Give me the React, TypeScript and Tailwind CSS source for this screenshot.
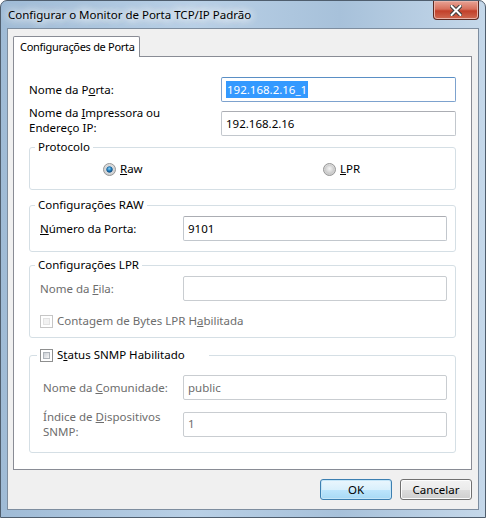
import React from "react";

const FONT = { fontFamily: '"Noto Sans", "Open Sans", sans-serif' };

function Radio({ checked }: { checked?: boolean }) {
  return (
    <svg width="13" height="13" viewBox="0 0 13 13" className="shrink-0">
      <defs>
        <radialGradient id="rg-off" cx="50%" cy="40%" r="60%">
          <stop offset="0%" stopColor="#f4f4f4" />
          <stop offset="100%" stopColor="#c9c9c9" />
        </radialGradient>
        <radialGradient id="rg-on" cx="45%" cy="35%" r="60%">
          <stop offset="0%" stopColor="#8fd2f4" />
          <stop offset="60%" stopColor="#1f7fc0" />
          <stop offset="100%" stopColor="#0d4f86" />
        </radialGradient>
      </defs>
      <circle cx="6.5" cy="6.5" r="6" fill="url(#rg-off)" stroke="#979797" strokeWidth="1" />
      <circle cx="6.5" cy="6.5" r="4.2" fill={checked ? "#eef2f5" : "url(#rg-off)"} stroke="#c8c8c8" strokeWidth="0.6" />
      {checked && <circle cx="6.5" cy="6.5" r="3" fill="url(#rg-on)" stroke="#1a4c77" strokeWidth="0.5" />}
    </svg>
  );
}

function Check({ disabled }: { disabled?: boolean }) {
  return (
    <span
      className={`w-[13px] h-[13px] shrink-0 border p-[2px] bg-white ${
        disabled ? "border-[#c6c6c6]" : "border-[#8e8f8f]"
      }`}
    >
      <span
        className={`block w-full h-full border ${
          disabled
            ? "border-[#e3e3e3] bg-[#f2f2f2]"
            : "border-[#aeb3b9] bg-gradient-to-br from-[#cbcfd5] to-[#f6f6f6]"
        }`}
      />
    </span>
  );
}

function Field({ value, disabled, selected }: { value?: string; disabled?: boolean; selected?: boolean }) {
  return (
    <div
      className={`h-[25px] rounded-[2px] border bg-white flex items-center px-[4px] ${
        selected
          ? "border-[#7da2ce] border-t-[#5a8fc5]"
          : disabled
          ? "border-[#c9cdd1]"
          : "border-[#c2c7cd] border-t-[#abadb3]"
      } ${disabled ? "text-[#6d6d6d]" : "text-black"}`}
    >
      {selected ? (
        <span className="bg-[#3399ff] text-white px-[1px] leading-[17px]">{value}</span>
      ) : (
        <span>{value}</span>
      )}
    </div>
  );
}

function Button({ label, primary }: { label: string; primary?: boolean }) {
  return (
    <div
      className={`w-[72px] h-[21px] rounded-[3px] border flex items-center justify-center text-black ${
        primary
          ? "border-[#3c7fb1] bg-[linear-gradient(#eaf6fd_0%,#d9f0fc_50%,#bee6fd_50%,#a7d9f5_100%)] shadow-[inset_0_0_0_1px_#c5e6f8]"
          : "border-[#707070] bg-[linear-gradient(#f2f2f2_0%,#ebebeb_50%,#dddddd_50%,#cfcfcf_100%)] shadow-[inset_0_0_0_1px_#fcfcfc]"
      }`}
    >
      {label}
    </div>
  );
}

export default function App() {
  return (
    <div
      className="w-[486px] h-[518px] relative overflow-hidden rounded-t-[7px] border border-[#4f5e6e] bg-[linear-gradient(90deg,#9fbbd6_0%,#b9d0e6_40%,#a7c1da_70%,#c5d8ea_100%)] flex flex-col text-[11.5px]"
      style={FONT}
    >
      {/* title bar */}
      <div className="h-[27px] shrink-0 flex items-center pl-[7px]">
        <span className="text-black [text-shadow:0_0_8px_#fff,0_0_10px_#fff,0_0_12px_#fff]">
          Configurar o Monitor de Porta TCP/IP Padrão
        </span>
      </div>
      <div className="absolute top-0 right-[6px] w-[46px] h-[19px] rounded-b-[4px] border border-t-0 border-[#5c2a22] bg-[linear-gradient(#e8a395_0%,#d7705c_45%,#c2402a_55%,#cf6a52_100%)] flex items-center justify-center shadow-[inset_0_0_0_1px_#eab3a8]">
        <svg width="12" height="11" viewBox="0 0 12 11">
          <path d="M1.5 1 L10.5 10 M10.5 1 L1.5 10" stroke="#3c3c3c" strokeWidth="4" strokeLinecap="round" />
          <path d="M1.5 1 L10.5 10 M10.5 1 L1.5 10" stroke="#ffffff" strokeWidth="2" strokeLinecap="round" />
        </svg>
      </div>

      {/* client area */}
      <div className="mx-[6px] mb-[7px] flex-1 border border-[#7d8d9f] bg-[#f0f0f0] flex flex-col px-[5px] pt-[7px] text-black">
        {/* tab header */}
        <div className="flex">
          <div className="w-[127px] h-[21px] -mb-px relative z-10 border border-b-0 border-[#898c95] bg-white rounded-t-[2px] flex items-center pl-[6px] whitespace-nowrap text-[11px] tracking-[-0.3px]">
            Configurações de Porta
          </div>
        </div>
        {/* tab page */}
        <div className="w-[459px] h-[414px] border border-[#898c95] bg-white px-[15px] pt-[20px]">
          <div className="flex items-center h-[25px]">
            <span className="w-[192px]">
              Nome da P<u>o</u>rta:
            </span>
            <div className="w-[235px]">
              <Field value="192.168.2.16_1" selected />
            </div>
          </div>
          <div className="flex items-start h-[25px] mt-[9px]">
            <span className="w-[192px] leading-[15px] -mt-[6px]">
              Nome da <u>I</u>mpressora ou
              <br />
              Endereço IP:
            </span>
            <div className="w-[235px]">
              <Field value="192.168.2.16" />
            </div>
          </div>

          <fieldset className="mt-[3px] w-[427px] border border-[#d5dfe5] rounded-[3px] pb-[12px]">
            <legend className="ml-[5px] px-[3px] leading-[16px]">Protocolo</legend>
            <div className="flex items-center h-[16px] mt-[6px]">
              <div className="ml-[73px] w-[220px] flex items-center gap-[4px]">
                <Radio checked />
                <span>
                  <u>R</u>aw
                </span>
              </div>
              <div className="flex items-center gap-[4px]">
                <Radio />
                <span>
                  <u>L</u>PR
                </span>
              </div>
            </div>
          </fieldset>

          <fieldset className="mt-[7px] w-[427px] border border-[#d5dfe5] rounded-[3px] pb-[10px]">
            <legend className="ml-[5px] px-[3px] leading-[16px]">Configurações RAW</legend>
            <div className="flex items-center mt-[3px] pl-[10px] pr-[8px]">
              <span className="w-[143px]">
                <u>N</u>úmero da Porta:
              </span>
              <div className="flex-1">
                <Field value="9101" />
              </div>
            </div>
          </fieldset>

          <fieldset className="mt-[5px] w-[427px] border border-[#d5dfe5] rounded-[3px] pb-[8px]">
            <legend className="ml-[5px] px-[3px] leading-[16px]">Configurações LPR</legend>
            <div className="pl-[10px] pr-[8px] text-[#6d6d6d]">
              <div className="flex items-center mt-[3px]">
                <span className="w-[143px]">
                  Nome da <u>F</u>ila:
                </span>
                <div className="flex-1">
                  <Field disabled />
                </div>
              </div>
              <div className="flex items-center gap-[4px] h-[16px] mt-[12px]">
                <Check disabled />
                <span>
                  Contagem de Bytes LPR H<u>a</u>bilitada
                </span>
              </div>
            </div>
          </fieldset>

          <fieldset className="mt-[9px] w-[427px] border border-[#d5dfe5] rounded-[3px] pb-[13px]">
            <legend className="ml-[7px] pl-[3px] w-[172px] leading-[16px] flex items-center gap-[4px]">
              <Check />
              <span>
                S<u>t</u>atus SNMP Habilitado
              </span>
            </legend>
            <div className="pl-[13px] pr-[8px] text-[#6d6d6d]">
              <div className="flex items-center mt-[12px]">
                <span className="w-[140px]">
                  Nome da <u>C</u>omunidade:
                </span>
                <div className="flex-1">
                  <Field value="public" disabled />
                </div>
              </div>
              <div className="flex items-center mt-[9px]">
                <span className="w-[140px] leading-[15px]">
                  Índice de <u>D</u>ispositivos
                  <br />
                  SNMP:
                </span>
                <div className="flex-1">
                  <Field value="1" disabled />
                </div>
              </div>
            </div>
          </fieldset>
        </div>

        {/* buttons */}
        <div className="flex justify-end gap-[8px] mt-[9px] pr-[1px]">
          <Button label="OK" primary />
          <Button label="Cancelar" />
        </div>
      </div>
    </div>
  );
}
